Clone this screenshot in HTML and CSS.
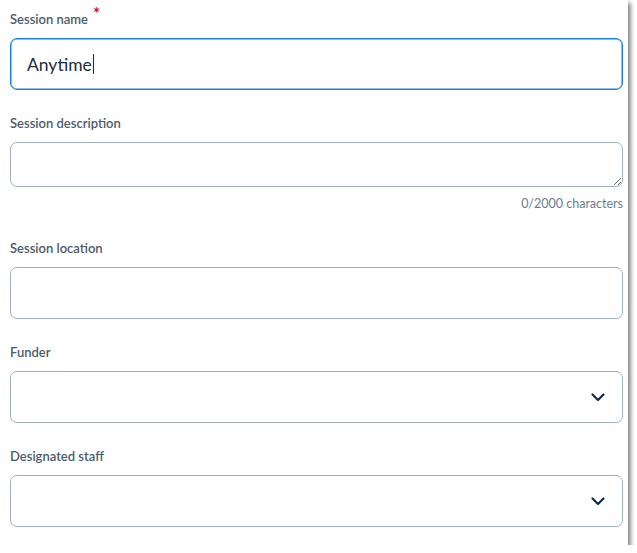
FILE: index.html
```html
<!DOCTYPE html>
<html>
<head>
<meta charset="utf-8">
<link rel="stylesheet" href="styles.css">
</head>
<body>
<div class="card">
  <div class="field">
    <label class="label">Session name<span class="req">*</span></label>
    <div class="input focused"><span class="value">Anytime</span><span class="caret"></span></div>
  </div>
  <div class="field">
    <label class="label">Session description</label>
    <textarea class="textarea"></textarea>
    <div class="counter">0/2000 characters</div>
  </div>
  <div class="field">
    <label class="label">Session location</label>
    <div class="input"></div>
  </div>
  <div class="field">
    <label class="label">Funder</label>
    <div class="input select">
      <svg class="chev" width="14" height="9" viewBox="0 0 14 9"><path d="M1.5 1.5 L7 7 L12.5 1.5" fill="none" stroke="#102a4a" stroke-width="2.2" stroke-linecap="round" stroke-linejoin="round"/></svg>
    </div>
  </div>
  <div class="field">
    <label class="label">Designated staff</label>
    <div class="input select">
      <svg class="chev" width="14" height="9" viewBox="0 0 14 9"><path d="M1.5 1.5 L7 7 L12.5 1.5" fill="none" stroke="#102a4a" stroke-width="2.2" stroke-linecap="round" stroke-linejoin="round"/></svg>
    </div>
  </div>
</div>
</body>
</html>
```
FILE: styles.css
```css
html, body {
  margin: 0;
  padding: 0;
  background: #fff;
}
body {
  font-family: Lato, "Open Sans", sans-serif;
}
.card {
  width: 628px;
  height: 545px;
  box-sizing: border-box;
  padding: 10px 5px 0 10px;
  background: #fff;
  box-shadow: 3px 3px 4px rgba(0, 0, 0, 0.45);
  display: flex;
  flex-direction: column;
  gap: 24px;
}
.field {
  display: flex;
  flex-direction: column;
}
.label {
  font-size: 13px;
  line-height: 18px;
  font-weight: 600;
  color: #4d5b6b;
  margin-bottom: 10px;
  display: flex;
  align-items: flex-start;
}
.req {
  color: #c0161b;
  font-size: 17px;
  line-height: 10px;
  margin-left: 5px;
  margin-top: -1px;
}
.input {
  height: 52px;
  box-sizing: border-box;
  border: 1px solid #9fb0c2;
  border-radius: 7px;
  display: flex;
  align-items: center;
  padding: 0 16px;
  background: #fff;
}
.input.focused {
  border-color: #1a7fe0;
  box-shadow: inset 0 0 0 0.5px #1a7fe0;
}
.value {
  font-size: 17.5px;
  color: #1d2b3a;
}
.caret {
  width: 1px;
  height: 20px;
  background: #1d2b3a;
  margin-left: 1px;
}
.textarea {
  height: 45px;
  box-sizing: border-box;
  border: 1px solid #9fb0c2;
  border-radius: 7px;
  resize: vertical;
  margin: 0;
  padding: 8px 16px;
  font-family: inherit;
  outline: none;
}
.counter {
  margin-top: 8px;
  margin-bottom: 2px;
  text-align: right;
  font-size: 12.5px;
  line-height: 18px;
  color: #6b7c8f;
}
.select {
  justify-content: flex-end;
  padding-right: 17px;
}
.chev {
  display: block;
}
```
